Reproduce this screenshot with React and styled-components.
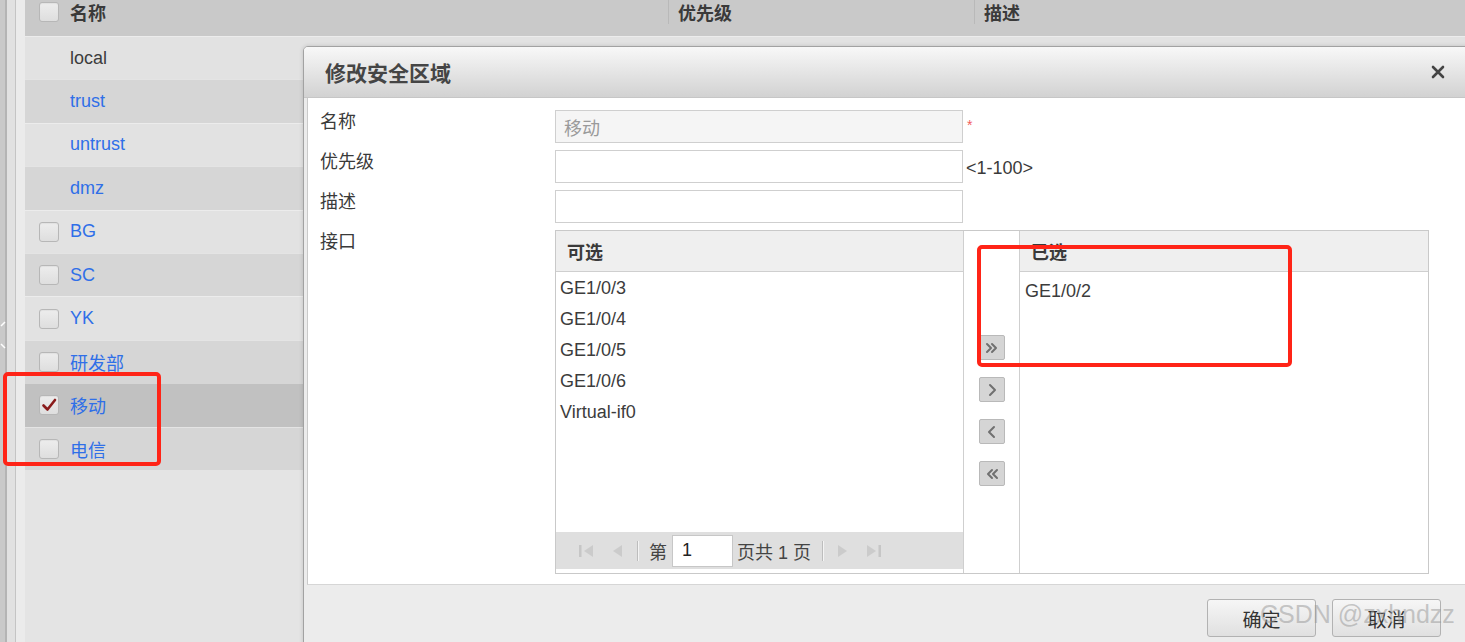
import React from "react"
import styled, { createGlobalStyle } from "styled-components"

const zones = [
  { name: "local", tone: "light", link: false, box: false },
  { name: "trust", tone: "dark", link: true, box: false },
  { name: "untrust", tone: "light", link: true, box: false },
  { name: "dmz", tone: "dark", link: true, box: false },
  { name: "BG", tone: "light", link: true, box: true },
  { name: "SC", tone: "dark", link: true, box: true },
  { name: "YK", tone: "light", link: true, box: true },
  { name: "研发部", tone: "dark", link: true, box: true },
  { name: "移动", tone: "selected", link: true, box: true, checked: true },
  { name: "电信", tone: "dark", link: true, box: true },
]

const available = ["GE1/0/3", "GE1/0/4", "GE1/0/5", "GE1/0/6", "Virtual-if0"]
const chosen = ["GE1/0/2"]

const tones = { light: "#e2e2e2", dark: "#d6d6d6", selected: "#c1c1c1" }

const GlobalStyle = createGlobalStyle`
  html, body {
    margin: 0;
    padding: 0;
    width: 1465px;
    height: 642px;
    overflow: hidden;
    background: #e4e4e4;
  }
  body {
    font-family: "Liberation Sans", "Noto Sans CJK SC", sans-serif;
    color: #333;
  }
  #root { height: 642px; }
`

const Check = ({ checked }) => (
  <CheckBox>
    {checked && (
      <svg width="18" height="18" viewBox="0 0 18 18">
        <path d="M3.5 9.5 L7.5 13.5 L15 4" fill="none" stroke="#8a1c1c" strokeWidth="2.6" strokeLinecap="round" strokeLinejoin="round" />
      </svg>
    )}
  </CheckBox>
)

const Chevrons = ({ dir, count }) => {
  const d = dir === "right"
    ? count === 2 ? "M3 4 L7 8 L3 12 M8 4 L12 8 L8 12" : "M6 3 L11 8 L6 13"
    : count === 2 ? "M8 4 L4 8 L8 12 M13 4 L9 8 L13 12" : "M10 3 L5 8 L10 13"
  return (
    <svg width="16" height="16" viewBox="0 0 16 16">
      <path d={d} fill="none" stroke="#707070" strokeWidth="2" strokeLinecap="round" strokeLinejoin="round" />
    </svg>
  )
}

const PagerIcon = ({ kind }) => (
  <svg width="20" height="20" viewBox="0 0 20 20">
    {kind === "first" && <rect x="2" y="4" width="2.5" height="12" fill="#c6c6c6" />}
    {(kind === "first" || kind === "prev") && <polygon points="16,4 7,10 16,16" fill="#cbcbcb" />}
    {(kind === "next" || kind === "last") && <polygon points="4,4 13,10 4,16" fill="#cbcbcb" />}
    {kind === "last" && <rect x="15.5" y="4" width="2.5" height="12" fill="#c6c6c6" />}
  </svg>
)

export default function App() {
  return (
    <Page>
      <GlobalStyle />
      <LeftStrip>
        <EdgeMark>
          <svg width="6" height="30" viewBox="0 0 6 30">
            <path d="M5 2 L1 6 M1 24 L5 28" stroke="#fff" strokeWidth="1.5" fill="none" />
          </svg>
        </EdgeMark>
      </LeftStrip>
      <ZoneTable>
        <HeaderRow>
          <HeaderCell>
            <Check />
            <HeaderText>名称</HeaderText>
          </HeaderCell>
          <HeaderCell divided>
            <HeaderText>优先级</HeaderText>
          </HeaderCell>
          <HeaderCell divided>
            <HeaderText>描述</HeaderText>
          </HeaderCell>
        </HeaderRow>
        {zones.map((z) => (
          <ZoneRow key={z.name} tone={z.tone}>
            {z.box ? <Check checked={z.checked} /> : <BoxSlot />}
            <ZoneName link={z.link}>{z.name}</ZoneName>
          </ZoneRow>
        ))}
        <Filler />
      </ZoneTable>

      <Dialog>
        <TitleBar>
          <span>修改安全区域</span>
          <svg width="14" height="14" viewBox="0 0 14 14">
            <path d="M2 2 L12 12 M12 2 L2 12" stroke="#444" strokeWidth="2.6" strokeLinecap="round" />
          </svg>
        </TitleBar>
        <DialogBody>
          <FormGrid>
            <Label>名称</Label>
            <TextInput disabled defaultValue="移动" />
            <Required>*</Required>

            <Label>优先级</Label>
            <TextInput />
            <Hint>&lt;1-100&gt;</Hint>

            <Label>描述</Label>
            <TextInput />
            <span />

            <Label>接口</Label>
            <Transfer>
              <ListPanel>
                <ListHeader>可选</ListHeader>
                <Items>
                  {available.map((i) => <Item key={i}>{i}</Item>)}
                </Items>
                <Pager>
                  <PagerIcon kind="first" />
                  <PagerIcon kind="prev" />
                  <PagerSep />
                  <span>第</span>
                  <PageInput defaultValue="1" />
                  <span>页共 1 页</span>
                  <PagerSep />
                  <PagerIcon kind="next" />
                  <PagerIcon kind="last" />
                </Pager>
              </ListPanel>
              <MoveColumn>
                <MoveButton><Chevrons dir="right" count={2} /></MoveButton>
                <MoveButton><Chevrons dir="right" count={1} /></MoveButton>
                <MoveButton><Chevrons dir="left" count={1} /></MoveButton>
                <MoveButton><Chevrons dir="left" count={2} /></MoveButton>
              </MoveColumn>
              <ListPanel>
                <ListHeader>已选</ListHeader>
                <Items chosen>
                  {chosen.map((i) => <Item key={i}>{i}</Item>)}
                </Items>
              </ListPanel>
            </Transfer>
          </FormGrid>
        </DialogBody>
        <Footer>
          <FooterButton>确定</FooterButton>
          <FooterButton>取消</FooterButton>
        </Footer>
      </Dialog>

      <Watermark>CSDN @zxhndzz</Watermark>
      <Annotation left={3} top={372} width={158} height={94} />
      <Annotation left={977} top={245} width={315} height={122} />
    </Page>
  )
}

const Page = styled.div`
  position: relative;
  display: flex;
  width: 1465px;
  height: 642px;
  overflow: hidden;
`

const LeftStrip = styled.div`
  position: relative;
  width: 25px;
  flex-shrink: 0;
  background: linear-gradient(
    to right,
    #c9c9c9 0 5px,
    #b4b4b4 5px 7px,
    #e1e1e1 7px 15px,
    #c4c4c4 15px 16px,
    #ebebeb 16px 25px
  );
`

const EdgeMark = styled.div`
  position: absolute;
  left: 0;
  top: 320px;
`

const ZoneTable = styled.div`
  flex: 1;
  display: flex;
  flex-direction: column;
`

const HeaderRow = styled.div`
  height: 36px;
  flex-shrink: 0;
  display: grid;
  grid-template-columns: 643px 306px 1fr;
  background: #c9c9c9;
`

const HeaderCell = styled.div`
  height: 24px;
  display: flex;
  align-items: center;
  gap: 11px;
  padding-left: ${(p) => (p.divided ? "9px" : "14px")};
  border-left: ${(p) => (p.divided ? "1px solid #b9b9b9" : "none")};
`

const HeaderText = styled.span`
  font-size: 18px;
  font-weight: bold;
  color: #3a3a3a;
`

const ZoneRow = styled.div`
  height: 43.4px;
  box-sizing: border-box;
  flex-shrink: 0;
  display: flex;
  align-items: center;
  gap: 11px;
  padding-left: 14px;
  background: ${(p) => tones[p.tone]};
  border-top: 1px solid rgba(255, 255, 255, 0.35);
`

const CheckBox = styled.span`
  width: 20px;
  height: 20px;
  box-sizing: border-box;
  display: inline-flex;
  align-items: center;
  justify-content: center;
  border: 1px solid #b7b7b7;
  border-radius: 3px;
  background: linear-gradient(#ededed, #dedede);
  box-shadow: inset 0 1px 1px rgba(0, 0, 0, 0.05);
`

const BoxSlot = styled.span`
  width: 20px;
  height: 20px;
`

const ZoneName = styled.span`
  font-size: 18px;
  color: ${(p) => (p.link ? "#2f6fe8" : "#3c3c3c")};
`

const Filler = styled.div`
  flex: 1;
  background: #e4e4e4;
`

const Dialog = styled.div`
  position: absolute;
  left: 303px;
  top: 46px;
  width: 1182px;
  height: 620px;
  box-sizing: border-box;
  display: flex;
  flex-direction: column;
  border: 1px solid #a2a2a2;
  border-radius: 5px 5px 0 0;
  background: #ececec;
  box-shadow: 0 0 4px rgba(0, 0, 0, 0.15);
`

const TitleBar = styled.div`
  height: 51px;
  flex-shrink: 0;
  box-sizing: border-box;
  display: flex;
  align-items: center;
  justify-content: space-between;
  padding: 0 39px 0 21px;
  background: linear-gradient(#f8f8f8, #d2d2d2);
  border-bottom: 1px solid #c6c6c6;
  border-radius: 4px 4px 0 0;
  font-size: 21px;
  font-weight: bold;
  color: #454545;
`

const DialogBody = styled.div`
  height: 487px;
  flex-shrink: 0;
  box-sizing: border-box;
  margin-left: 3px;
  padding: 12px 0 0 12px;
  background: #fff;
  border-left: 1px solid #cacaca;
  border-bottom: 1px solid #d6d6d6;
`

const FormGrid = styled.div`
  display: grid;
  grid-template-columns: 235px 408px 1fr;
  grid-auto-rows: min-content;
  row-gap: 7px;
`

const Label = styled.div`
  font-size: 18px;
  line-height: 22px;
  padding-top: 1px;
  color: #3a3a3a;
`

const TextInput = styled.input`
  width: 408px;
  height: 33px;
  box-sizing: border-box;
  margin: 0;
  padding: 0 8px;
  border: 1px solid #cfcfcf;
  background: ${(p) => (p.disabled ? "#f5f5f5" : "#fff")};
  font-family: inherit;
  font-size: 18px;
  color: #9a9a9a;
  outline: none;
`

const Required = styled.span`
  padding: 7px 0 0 4px;
  font-size: 14px;
  color: #f25c5c;
`

const Hint = styled.span`
  display: flex;
  align-items: center;
  padding: 3px 0 0 3px;
  font-size: 18px;
  color: #3a3a3a;
`

const Transfer = styled.div`
  grid-column: 2 / 4;
  width: 874px;
  height: 344px;
  box-sizing: border-box;
  display: grid;
  grid-template-columns: 407px 57px 1fr;
  border: 1px solid #c9c9c9;
`

const ListPanel = styled.div`
  display: flex;
  flex-direction: column;
  min-height: 0;
`

const ListHeader = styled.div`
  height: 40px;
  flex-shrink: 0;
  display: flex;
  align-items: center;
  padding-left: 11px;
  background: #efefef;
  border-bottom: 1px solid #cfcfcf;
  font-size: 18px;
  font-weight: bold;
  color: #3a3a3a;
`

const Items = styled.div`
  padding: ${(p) => (p.chosen ? "4px 0 0 5px" : "1px 0 0 4px")};
`

const Item = styled.div`
  line-height: 31px;
  font-size: 18px;
  color: #3c3c3c;
`

const Pager = styled.div`
  margin-top: auto;
  margin-bottom: 4px;
  height: 37px;
  display: flex;
  align-items: center;
  gap: 9px;
  padding-left: 21px;
  background: #dfdfdf;
  font-size: 18px;
  color: #444;
`

const PagerSep = styled.span`
  width: 1px;
  height: 20px;
  margin: 0 2px;
  background: #bdbdbd;
  box-shadow: 1px 0 0 #f4f4f4;
`

const PageInput = styled.input`
  width: 61px;
  height: 32px;
  box-sizing: border-box;
  margin: 0 -5px 0 -4px;
  padding: 0 9px;
  border: 1px solid #c7c7c7;
  background: #fff;
  font-family: inherit;
  font-size: 18px;
  color: #222;
  outline: none;
`

const MoveColumn = styled.div`
  display: flex;
  flex-direction: column;
  align-items: center;
  gap: 17px;
  padding-top: 104px;
  border-left: 1px solid #cfcfcf;
  border-right: 1px solid #cfcfcf;
`

const MoveButton = styled.div`
  width: 26px;
  height: 25px;
  box-sizing: border-box;
  display: flex;
  align-items: center;
  justify-content: center;
  border: 1px solid #b9b9b9;
  border-radius: 2px;
  background: #d5d5d5;
`

const Footer = styled.div`
  flex: 1;
  display: flex;
  justify-content: flex-end;
  gap: 16px;
  padding: 14px 43px 0 0;
`

const FooterButton = styled.div`
  width: 109px;
  height: 38px;
  box-sizing: border-box;
  display: flex;
  align-items: center;
  justify-content: center;
  border: 1px solid #b2b2b2;
  border-radius: 3px;
  background: linear-gradient(#f6f6f6, #e0e0e0);
  font-size: 19px;
  color: #333;
`

const Watermark = styled.div`
  position: absolute;
  left: 1260px;
  top: 600px;
  font-size: 25px;
  color: rgba(150, 150, 150, 0.5);
  white-space: nowrap;
  pointer-events: none;
`

const Annotation = styled.div`
  position: absolute;
  left: ${(p) => p.left}px;
  top: ${(p) => p.top}px;
  width: ${(p) => p.width}px;
  height: ${(p) => p.height}px;
  box-sizing: border-box;
  border: 4px solid #ff2417;
  border-radius: 5px;
  pointer-events: none;
`
